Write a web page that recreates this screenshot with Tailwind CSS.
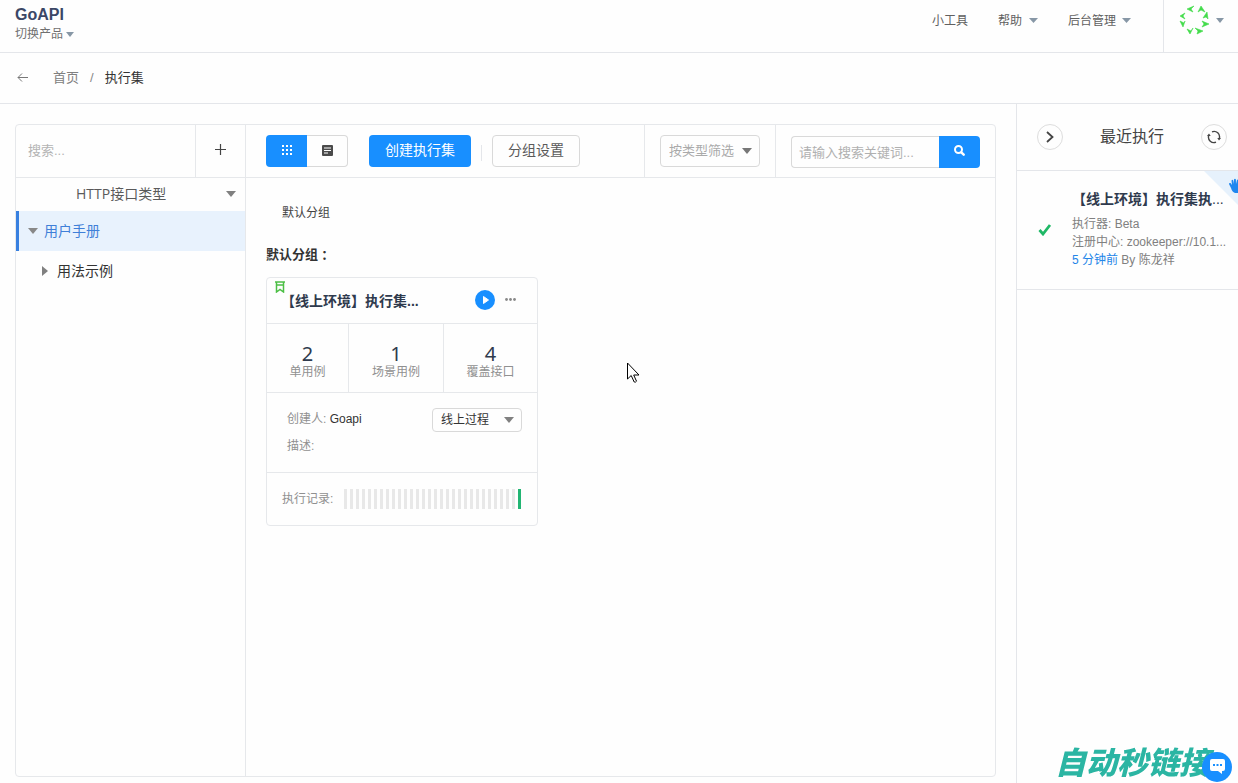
<!DOCTYPE html>
<html lang="zh-CN">
<head>
<meta charset="utf-8">
<meta name="viewport" content="width=device-width, initial-scale=1">
<title>GoAPI - 执行集</title>
<script src="https://cdn.jsdelivr.net/npm/@tailwindcss/browser@4"></script>
</head>
<body class="flex min-h-screen flex-col overflow-x-hidden bg-[#fefefe] font-['Liberation_Sans','Noto_Sans_CJK_SC',sans-serif] text-sm text-[#333]">

<header class="flex h-[53px] shrink-0 justify-between border-b border-[#e4e6ea]">
  <div class="flex flex-col pt-1.5 pl-[15px]">
    <a href="#" class="text-base leading-[18px] font-bold text-[#3b4766]">GoAPI</a>
    <button class="flex items-center gap-[3px] text-xs leading-5 text-[#707070]">切换产品
      <svg class="h-[5px] w-2" viewBox="0 0 8 5" fill="#8797a6"><path d="M0 0h8L4 5z"/></svg>
    </button>
  </div>
  <div class="flex">
    <nav class="flex h-[41px] items-center pr-8 text-xs text-[#606060]">
      <a href="#">小工具</a>
      <button class="ml-[30px] flex items-center gap-[7px]">帮助
        <svg class="h-[5px] w-[9px]" viewBox="0 0 8 5" fill="#8797a6" preserveAspectRatio="none"><path d="M0 0h8L4 5z"/></svg>
      </button>
      <button class="ml-[30px] flex items-center gap-1.5">后台管理
        <svg class="h-[5px] w-[9px]" viewBox="0 0 8 5" fill="#8797a6" preserveAspectRatio="none"><path d="M0 0h8L4 5z"/></svg>
      </button>
    </nav>
    <button aria-label="用户菜单" class="flex w-[75px] items-start gap-1.5 border-l border-[#e4e6ea] pt-1 pl-[15px]">
      <svg class="h-[31px] w-[31px]" viewBox="0 0 31 31" fill="#43dc4b" stroke="#43dc4b" stroke-width=".6">
        <path d="M15 2L8 5l6 3-2-3zM19 8l3-6 4 6-4-2zM6 9L1 12l5 3-2-3zM24 14l4-6 1 7-2-2zM1 17l4 2 1-2-2 6zM23 17l7 3-7 3 2-3zM8 25l4 2 2-3-3 6zM16 24l8 3-6 3 1-3z"/>
      </svg>
      <svg class="mt-[14px] h-[5px] w-2" viewBox="0 0 8 5" fill="#8797a6"><path d="M0 0h8L4 5z"/></svg>
    </button>
  </div>
</header>

<nav class="flex h-[51px] shrink-0 items-center border-b border-[#e4e6ea] pl-[17px] text-[13px]">
  <button aria-label="返回" class="mr-6">
    <svg class="h-3 w-3" viewBox="0 0 12 12" fill="none" stroke="#777"><path d="M11 5.500H1M5 1.500l-4 4 4 4"/></svg>
  </button>
  <a href="#" class="text-[#808080]">首页</a>
  <span class="mx-[11px] text-[#888]">/</span>
  <span class="text-[#333]">执行集</span>
</nav>

<div class="flex flex-1">
  <main class="flex min-w-0 flex-1 px-[15px] pt-5 pr-5 pb-1.5">
    <div class="flex min-w-0 flex-1 rounded border border-[#e6e8eb]">

      <section class="flex w-[230px] shrink-0 flex-col border-r border-[#e6e8eb]">
        <div class="flex h-[53px] border-b border-[#e6e8eb]">
          <input aria-label="搜索" placeholder="搜索..." class="min-w-0 flex-1 px-3 text-[13px] outline-none placeholder:text-[#b4b4b4]">
          <button aria-label="新增" class="flex w-[50px] items-center justify-center border-l border-[#e6e8eb]">
            <svg class="mr-px mb-1 h-3 w-3" viewBox="0 0 12 12" fill="none" stroke="#444" stroke-width="1.200"><path d="M6.500 1v11M1 6.500h11"/></svg>
          </button>
        </div>
        <div class="relative h-[33px]">
          <select aria-label="接口类型" class="h-full w-full appearance-none bg-transparent pb-px pl-[60px] font-['Open_Sans','Noto_Sans_CJK_SC',sans-serif] text-sm text-[#5a5a5a]">
            <option>HTTP接口类型</option>
          </select>
          <svg class="pointer-events-none absolute top-[13px] right-[9px] h-[6px] w-[10px]" viewBox="0 0 10 6" fill="#808080"><path d="M0 0h10L5 6z"/></svg>
        </div>
        <button class="flex h-10 items-center gap-1.5 border-l-[3px] border-[#3880e0] bg-[#e8f2fd] pl-[9px] text-sm text-[#3f7fd8]">
          <svg class="h-[6px] w-[10px]" viewBox="0 0 10 6" fill="#888"><path d="M0 0h10L5 6z"/></svg>用户手册
        </button>
        <button class="flex h-10 items-center gap-[9px] pl-[26px] text-sm text-[#333]">
          <svg class="h-[10px] w-[6px]" viewBox="0 0 6 10" fill="#808080"><path d="M0 0v10L6 5z"/></svg>用法示例
        </button>
      </section>

      <section class="flex min-w-0 flex-1 flex-col">
        <div class="flex h-[53px] border-b border-[#e6e8eb]">
          <div class="flex flex-1 items-start pt-[10px] pl-5">
            <div class="flex h-8">
              <button aria-label="卡片视图" class="flex w-[41px] items-center justify-center rounded-l bg-[#188fff]">
                <svg class="mb-[2px] h-[10px] w-[10px]" viewBox="0 0 10 10" fill="#fff"><path d="M0 0h2v2H0zM4 0h2v2H4zM8 0h2v2H8zM0 4h2v2H0zM4 4h2v2H4zM8 4h2v2H8zM0 8h2v2H0zM4 8h2v2H4zM8 8h2v2H8z"/></svg>
              </button>
              <button aria-label="列表视图" class="flex w-[41px] items-center justify-center rounded-r border border-l-0 border-[#d9d9d9]">
                <svg class="mb-[2px] h-[11px] w-[11px]" viewBox="0 0 11 11"><rect width="11" height="11" rx="1" fill="#4b4b4b"/><path d="M2 3h7M2 5.500h7M2 8h4" stroke="#fff" stroke-width="1.200"/></svg>
              </button>
            </div>
            <button class="ml-[21px] h-8 w-[102px] rounded bg-[#188fff] pb-[2px] text-sm text-white">创建执行集</button>
            <span class="mt-[10px] ml-[10px] h-4 w-px bg-[#e4e6ea]"></span>
            <button class="ml-[10px] h-8 w-[88px] rounded border border-[#d9d9d9] pb-[2px] text-sm text-[#5a5a5a]">分组设置</button>
          </div>
          <div class="border-l border-[#e6e8eb] px-[15px] pt-[10px]">
            <div class="relative h-8 w-[100px]">
              <select aria-label="按类型筛选" class="h-full w-full appearance-none rounded border border-[#d9d9d9] bg-transparent pl-2 text-[13px] text-[#aaa]">
                <option>按类型筛选</option>
              </select>
              <svg class="pointer-events-none absolute top-[13px] right-[8px] h-[6px] w-[10px]" viewBox="0 0 10 6" fill="#777"><path d="M0 0h10L5 6z"/></svg>
            </div>
          </div>
          <div class="flex items-start border-l border-[#e6e8eb] px-[15px] pt-[11px]">
            <input aria-label="搜索关键词" placeholder="请输入搜索关键词..." class="h-8 w-[148px] rounded-l border border-r-0 border-[#d9d9d9] px-[7px] text-[13px] outline-none placeholder:text-[#b0b0b0]">
            <button aria-label="搜索" class="flex h-8 w-[41px] items-center justify-center rounded-r bg-[#188fff]">
              <svg class="mb-[3px] h-[11px] w-[11px]" viewBox="0 0 11 11" fill="none" stroke="#fff" stroke-width="2"><circle cx="4.500" cy="4.500" r="3.500"/><path d="M7.300 7.300l2.400 2.400" stroke-width="2.400" stroke-linecap="round"/></svg>
            </button>
          </div>
        </div>

        <div class="flex flex-col items-start px-5 pt-[25px]">
          <a href="#" class="pl-4 text-xs leading-5 text-[#444]">默认分组</a>
          <h2 class="mt-5 flex h-6 items-center text-[13px] leading-6 font-bold text-[#333]">默认分组<span class="font-['Noto_Sans_CJK_TC',sans-serif]" lang="zh-TW">：</span></h2>

          <article class="mt-[10px] w-[272px] rounded border border-[#e6e8eb]">
            <div class="relative flex h-[46px] items-center border-b border-[#e6e8eb] pl-[14px]">
              <svg class="absolute top-[3px] left-[8px] h-3 w-[10px]" viewBox="0 0 10 12" fill="none" stroke="#4cbf45" stroke-width="1.500"><path d="M0 1h10M1.500 1v10L5 8.500 8.500 11V1M1.500 4h7"/></svg>
              <h3 class="w-[150px] truncate text-sm font-bold text-[#2f3a4d]">【线上环境】执行集...</h3>
              <button aria-label="执行" class="mb-[2px] ml-11">
                <svg class="h-5 w-5" viewBox="0 0 20 20"><circle cx="10" cy="10" r="10" fill="#188fff"/><path d="M8.500 6.500v7l5-3.500z" fill="#fff" stroke="#fff" stroke-linejoin="round"/></svg>
              </button>
              <button aria-label="更多" class="mb-[2px] ml-[10px]">
                <svg class="h-[3px] w-[11px]" viewBox="0 0 11 3" fill="#888"><circle cx="1.500" cy="1.500" r="1.400"/><circle cx="5.500" cy="1.500" r="1.400"/><circle cx="9.500" cy="1.500" r="1.400"/></svg>
              </button>
            </div>
            <dl class="flex h-[69px] border-b border-[#e6e8eb] text-center">
              <div class="flex w-[82px] flex-col-reverse justify-end border-r border-[#e6e8eb] pt-5"><dt class="text-xs leading-4 text-[#909090]">单用例</dt><dd class="font-['Noto_Sans'] text-xl leading-5 text-[#2f3a4d]">2</dd></div>
              <div class="flex w-[95px] flex-col-reverse justify-end border-r border-[#e6e8eb] pt-5"><dt class="text-xs leading-4 text-[#909090]">场景用例</dt><dd class="font-['Noto_Sans'] text-xl leading-5 text-[#2f3a4d]">1</dd></div>
              <div class="flex flex-1 flex-col-reverse justify-end pt-5"><dt class="text-xs leading-4 text-[#909090]">覆盖接口</dt><dd class="font-['Noto_Sans'] text-xl leading-5 text-[#2f3a4d]">4</dd></div>
            </dl>
            <div class="flex h-20 justify-between border-b border-[#e6e8eb] pt-[13px] pr-[15px] pl-5 text-xs text-[#909090]">
              <div class="leading-[27px]">
                <p>创建人: <span class="text-[#333]">Goapi</span></p>
                <p>描述:</p>
              </div>
              <div class="relative mt-[2px] h-6 w-[90px]">
                <select aria-label="环境" class="h-full w-full appearance-none rounded-sm border border-[#d9d9d9] bg-transparent pl-2 text-xs text-[#333]">
                  <option>线上过程</option>
                </select>
                <svg class="pointer-events-none absolute top-[9px] right-[8px] h-[6px] w-[10px]" viewBox="0 0 10 6" fill="#808080"><path d="M0 0h10L5 6z"/></svg>
              </div>
            </div>
            <div class="flex h-[52px] items-center pl-[15px] text-xs text-[#909090]">
              <span class="w-[62px]">执行记录:</span>
              <div class="flex h-5 gap-[3px]" role="img" aria-label="最近三十次执行">
                <i class="w-[3px] bg-[#e8e8e8]"></i><i class="w-[3px] bg-[#e8e8e8]"></i><i class="w-[3px] bg-[#e8e8e8]"></i><i class="w-[3px] bg-[#e8e8e8]"></i><i class="w-[3px] bg-[#e8e8e8]"></i><i class="w-[3px] bg-[#e8e8e8]"></i><i class="w-[3px] bg-[#e8e8e8]"></i><i class="w-[3px] bg-[#e8e8e8]"></i><i class="w-[3px] bg-[#e8e8e8]"></i><i class="w-[3px] bg-[#e8e8e8]"></i>
                <i class="w-[3px] bg-[#e8e8e8]"></i><i class="w-[3px] bg-[#e8e8e8]"></i><i class="w-[3px] bg-[#e8e8e8]"></i><i class="w-[3px] bg-[#e8e8e8]"></i><i class="w-[3px] bg-[#e8e8e8]"></i><i class="w-[3px] bg-[#e8e8e8]"></i><i class="w-[3px] bg-[#e8e8e8]"></i><i class="w-[3px] bg-[#e8e8e8]"></i><i class="w-[3px] bg-[#e8e8e8]"></i><i class="w-[3px] bg-[#e8e8e8]"></i>
                <i class="w-[3px] bg-[#e8e8e8]"></i><i class="w-[3px] bg-[#e8e8e8]"></i><i class="w-[3px] bg-[#e8e8e8]"></i><i class="w-[3px] bg-[#e8e8e8]"></i><i class="w-[3px] bg-[#e8e8e8]"></i><i class="w-[3px] bg-[#e8e8e8]"></i><i class="w-[3px] bg-[#e8e8e8]"></i><i class="w-[3px] bg-[#e8e8e8]"></i><i class="w-[3px] bg-[#e8e8e8]"></i><i class="w-[3px] bg-[#22b573]"></i>
              </div>
            </div>
          </article>
        </div>
      </section>
    </div>
  </main>

  <aside class="w-[222px] shrink-0 border-l border-[#e4e6ea]">
    <div class="flex h-[67px] items-center justify-between border-b border-[#e4e6ea] pr-[11px] pl-5">
      <button aria-label="收起" class="flex h-[26px] w-[26px] items-center justify-center rounded-full border border-[#ddd]">
        <svg class="h-3 w-2" viewBox="0 0 8 12" fill="none" stroke="#444" stroke-width="1.800"><path d="M1 1l5.500 5L1 11"/></svg>
      </button>
      <h2 class="text-base text-[#444]">最近执行</h2>
      <button aria-label="刷新" class="flex h-[26px] w-[26px] items-center justify-center rounded-full border border-[#ddd]">
        <svg class="h-[14px] w-[14px]" viewBox="0 0 14 14" fill="none" stroke="#444" stroke-width="1.400"><path d="M5 1.800A5.500 5.500 0 0 1 12.300 8.500M9 12.200A5.500 5.500 0 0 1 1.700 5.500"/><path d="M10.300 8h3.700l-2 2.500zM0 6h3.700L2 3.500z" fill="#444" stroke="none"/></svg>
      </button>
    </div>
    <article class="relative flex h-[119px] border-b border-[#e4e6ea]">
      <svg class="absolute top-0 right-0 h-[34px] w-[34px]" viewBox="0 0 34 34"><path d="M0 0h34v34z" fill="#e6f1fc"/><path d="M27 17l-2-4q0-1.500 1.500-1l1.500 2-.5-4.500q1-1.500 1.800 0l.7 3.500V8.500q1-1.500 1.900 0l.1 4.500 1-4q.5-.8 1-.5V22h-3q-3-1-4-5z" fill="#1f87f0"/></svg>
      <svg class="mt-[53px] ml-[21px] h-3 w-[14px] shrink-0" viewBox="0 0 14 12" fill="none" stroke="#1fb866" stroke-width="2.800"><path d="M1.500 6l3.500 4L12 1"/></svg>
      <div class="ml-5 min-w-0 pt-[17px] text-xs leading-[18px] text-[#808080]">
        <h3 class="mb-[5px] text-sm leading-[22px] font-bold whitespace-nowrap text-[#2f3a4d]">【线上环境】执行集执<span class="font-normal">...</span></h3>
        <p>执行器: Beta</p>
        <p class="whitespace-nowrap">注册中心: zookeeper://10.1...</p>
        <p><a href="#" class="text-[#2385e8]">5 分钟前</a> By 陈龙祥</p>
      </div>
    </article>
  </aside>
</div>

<div class="fixed right-7 bottom-1 font-['Noto_Sans_CJK_SC',sans-serif] text-[31px] leading-9 font-black whitespace-nowrap text-[#2bb5a3] italic">自动秒链接</div>
<button aria-label="在线客服" class="fixed right-[6px] bottom-px">
  <svg class="h-[30px] w-[30px]" viewBox="0 0 30 30"><circle cx="15" cy="15" r="15" fill="#188fff"/><path d="M10 7h11q2 0 2 2v8q0 2-2 2h-1v3l-4-3h-6q-2 0-2-2V9q0-2 2-2z" fill="#fff"/><path d="M11 12h2v2h-2zM14.500 12h2v2h-2zM18 12h2v2h-2z" fill="#188fff"/></svg>
</button>

<svg class="pointer-events-none fixed top-[362px] left-[627px] h-[21px] w-[13px]" viewBox="0 0 13 21"><path d="M.5 1v16l3.700-3.500 3 6.500q1.500.6 2.300-.8L6.700 13h5.300z" fill="#fff" stroke="#000"/></svg>
</body>
</html>
